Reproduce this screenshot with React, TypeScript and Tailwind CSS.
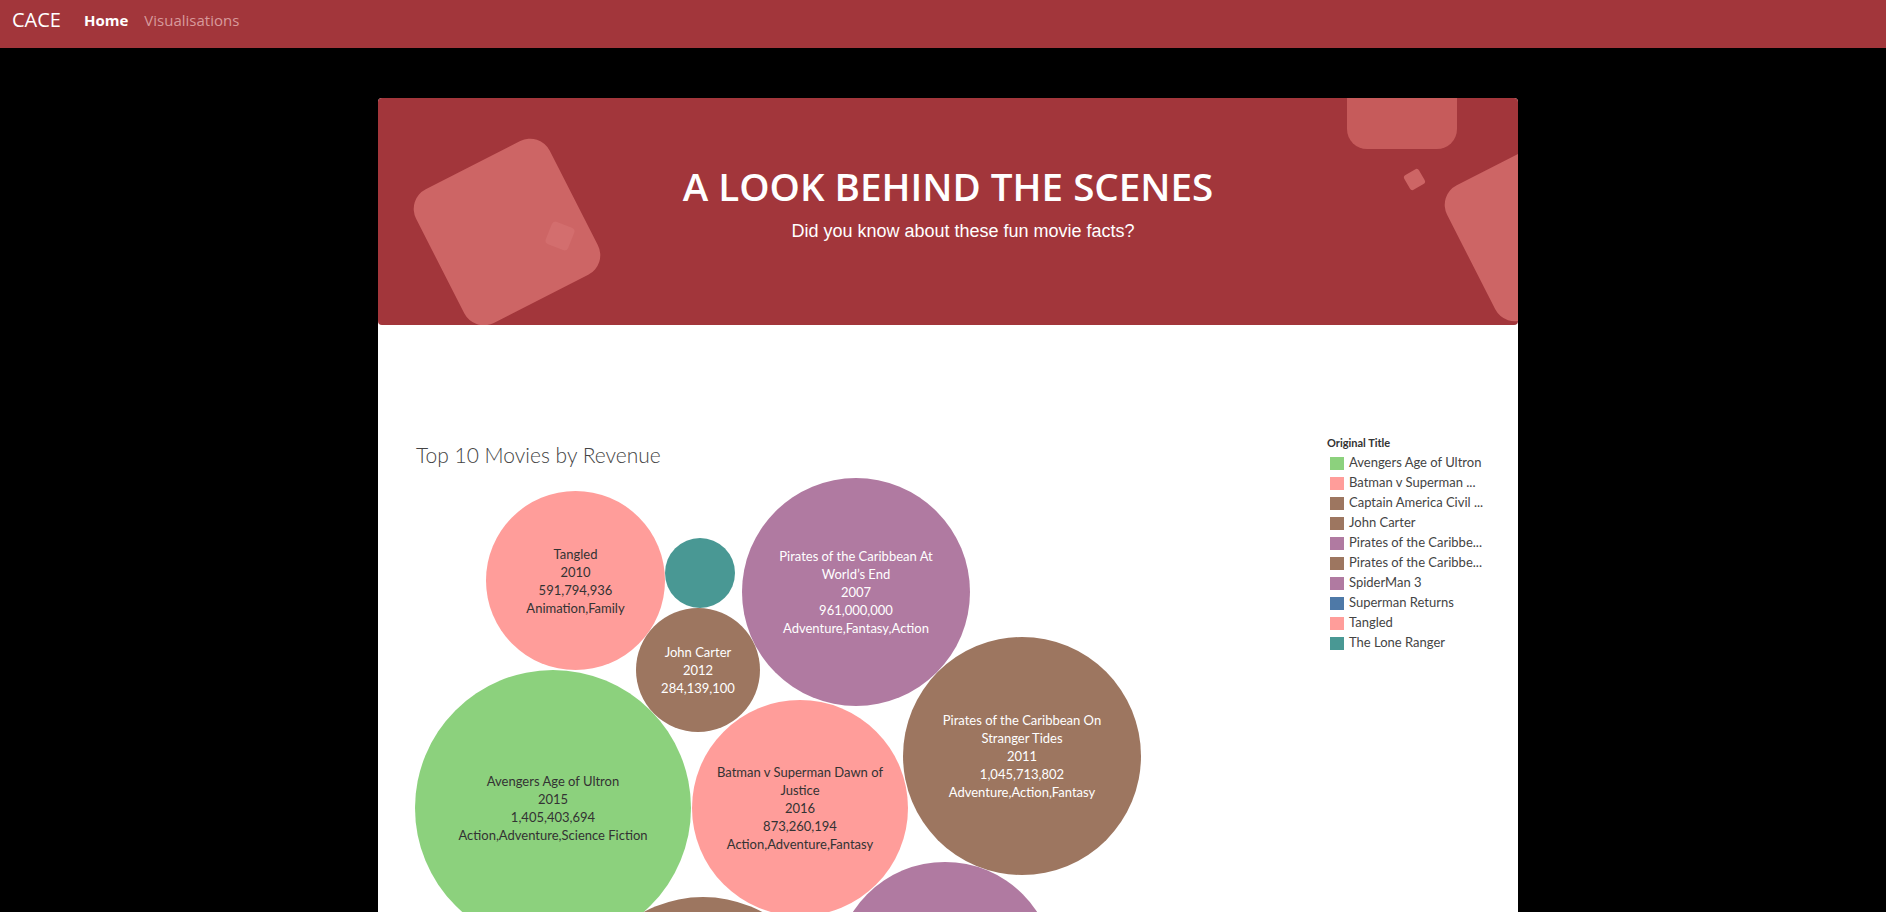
const bubbles = [
  {
    left: 108,
    top: 166,
    size: 179,
    color: "bg-[#FF9D9A]",
    dark: false,
    lines: ["Tangled", "2010", "591,794,936", "Animation,Family"],
  },
  { left: 287, top: 213, size: 70, color: "bg-[#499894]", dark: true, lines: [] },
  {
    left: 364,
    top: 153,
    size: 228,
    color: "bg-[#B07AA1]",
    dark: true,
    lines: [
      "Pirates of the Caribbean At",
      "World\u2019s End",
      "2007",
      "961,000,000",
      "Adventure,Fantasy,Action",
    ],
  },
  {
    left: 258,
    top: 283,
    size: 124,
    color: "bg-[#9D7660]",
    dark: true,
    lines: ["John Carter", "2012", "284,139,100"],
  },
  {
    left: 37,
    top: 345,
    size: 276,
    color: "bg-[#8CD17D]",
    dark: false,
    lines: [
      "Avengers Age of Ultron",
      "2015",
      "1,405,403,694",
      "Action,Adventure,Science Fiction",
    ],
  },
  {
    left: 314,
    top: 375,
    size: 216,
    color: "bg-[#FF9D9A]",
    dark: false,
    lines: [
      "Batman v Superman Dawn of",
      "Justice",
      "2016",
      "873,260,194",
      "Action,Adventure,Fantasy",
    ],
  },
  {
    left: 525,
    top: 312,
    size: 238,
    color: "bg-[#9D7660]",
    dark: true,
    lines: [
      "Pirates of the Caribbean On",
      "Stranger Tides",
      "2011",
      "1,045,713,802",
      "Adventure,Action,Fantasy",
    ],
  },
  // below the fold: labels fall outside the visible area
  { left: 457, top: 537, size: 220, color: "bg-[#B07AA1]", dark: true, lines: [] },
  { left: 200, top: 572, size: 250, color: "bg-[#9D7660]", dark: true, lines: [] },
];

const legend = [
  { label: "Avengers Age of Ultron", color: "bg-[#8CD17D]" },
  { label: "Batman v Superman ...", color: "bg-[#FF9D9A]" },
  { label: "Captain America Civil ...", color: "bg-[#9D7660]" },
  { label: "John Carter", color: "bg-[#9D7660]" },
  { label: "Pirates of the Caribbe...", color: "bg-[#B07AA1]" },
  { label: "Pirates of the Caribbe...", color: "bg-[#9D7660]" },
  { label: "SpiderMan 3", color: "bg-[#B07AA1]" },
  { label: "Superman Returns", color: "bg-[#4E79A7]" },
  { label: "Tangled", color: "bg-[#FF9D9A]" },
  { label: "The Lone Ranger", color: "bg-[#499894]" },
];

function Navbar() {
  return (
    <nav className="h-[48px] bg-[#A2363B] flex items-center pl-[12px] pb-[8px] font-['Open_Sans',sans-serif]">
      <span className="text-white text-[20px] mr-[23px]">CACE</span>
      <span className="text-white text-[15px] font-bold mr-[16px]">Home</span>
      <span className="text-[#D89A9C] text-[15px]">Visualisations</span>
    </nav>
  );
}

function Banner() {
  return (
    <div className="relative h-[227px] bg-[#A2363B] rounded-[4px] overflow-hidden flex flex-col items-center">
      {/* decorative squares */}
      <div className="absolute left-[54px] top-[59px] w-[150px] h-[150px] rounded-[22px] bg-[#CD6565] -rotate-[27deg]" />
      <div className="absolute left-[170px] top-[126px] w-[24px] h-[24px] rounded-[4px] bg-[#D36E6E] rotate-[22deg]" />
      <div className="absolute left-[969px] top-[-60px] w-[110px] h-[111px] rounded-[20px] bg-[#C65B5B]" />
      <div className="absolute left-[1028px] top-[73px] w-[17px] h-[17px] rounded-[3px] bg-[#CD6565] -rotate-[30deg]" />
      <div className="absolute left-[1085px] top-[55px] w-[150px] h-[150px] rounded-[22px] bg-[#CD6565] -rotate-[27deg]" />

      <h1 className="relative mt-[62px] text-white text-[38.6px] leading-[52px] font-semibold font-['Open_Sans',sans-serif]">
        A LOOK BEHIND THE SCENES
      </h1>
      <p className="relative mt-[6px] pl-[30px] text-white text-[18px] leading-[27px] font-['Liberation_Sans',Arial,sans-serif]">
        Did you know about these fun movie facts?
      </p>
    </div>
  );
}

function Bubble({
  left,
  top,
  size,
  color,
  dark,
  lines,
}: {
  left: number;
  top: number;
  size: number;
  color: string;
  dark: boolean;
  lines: string[];
}) {
  return (
    <div
      className={`absolute rounded-full flex flex-col items-center justify-center text-center text-[13px] leading-[18px] whitespace-nowrap ${color} ${
        dark ? "text-white" : "text-[#333333]"
      }`}
      style={{ left, top, width: size, height: size }}
    >
      {lines.map((line, i) => (
        <div key={i}>{line}</div>
      ))}
    </div>
  );
}

function Chart() {
  return (
    <div className="relative flex-1 flex bg-white font-['Lato',sans-serif]">
      <div className="absolute inset-0">
        {bubbles.map((b, i) => (
          <Bubble key={i} {...b} />
        ))}
      </div>
      <div className="relative flex-1 pl-[38px] pt-[116px]">
        <h2 className="text-[21px] leading-[28px] font-light text-[#444444]">
          Top 10 Movies by Revenue
        </h2>
      </div>
      <div className="relative w-[191px] pt-[110px]">
        <div className="text-[11px] leading-[16px] font-bold text-[#333333] mb-[2px]">
          Original Title
        </div>
        {legend.map((item, i) => (
          <div key={i} className="h-[20px] flex items-center">
            <span className={`ml-[3px] w-[14px] h-[13px] shrink-0 ${item.color}`} />
            <span className="ml-[5px] text-[13px] text-[#444444] whitespace-nowrap">
              {item.label}
            </span>
          </div>
        ))}
      </div>
    </div>
  );
}

export default function App() {
  return (
    <div className="h-[912px] overflow-hidden bg-black flex flex-col">
      <Navbar />
      <div className="flex-1 flex flex-col ml-[378px] mt-[50px] w-[1140px] bg-white rounded-t-[4px]">
        <Banner />
        <Chart />
      </div>
    </div>
  );
}
